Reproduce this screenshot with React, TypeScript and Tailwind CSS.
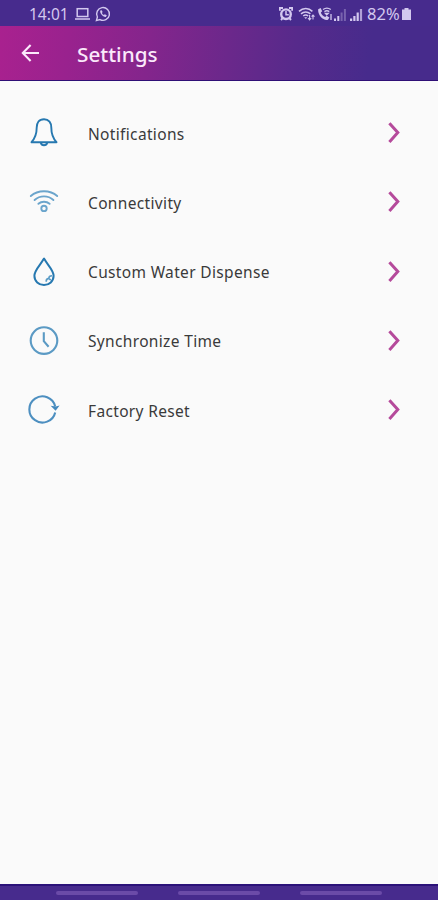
import React from 'react';

const BellIcon = () => (
  <svg width="32" height="32" viewBox="0 0 32 32" fill="none" stroke="#2678b0" strokeWidth="1.9" strokeLinejoin="round">
    <path d="M16 2.2c-5 0-7.3 3.8-7.3 8.4 0 6.6-1.6 10.8-5.2 14.6h25c-3.600-3.800-5.200-8-5.200-14.600 0-4.600-2.300-8.400-7.300-8.400z" />
    <path d="M12.800 25.800a3.300 3.300 0 0 0 6.400 0" />
  </svg>
);

const WifiIcon = () => (
  <svg width="32" height="32" viewBox="0 0 32 32" fill="none" stroke="#6ba5cc" strokeWidth="1.9" strokeLinecap="round">
    <path d="M2.800 10c7.200-6.400 19.200-6.400 26.400 0" />
    <path d="M6.600 14c5.200-4.800 13.600-4.800 18.800 0" />
    <path d="M10.400 17.800c3.200-2.800 8-2.800 11.200 0" />
    <circle cx="16" cy="22.400" r="2.700" />
  </svg>
);

const DropIcon = () => (
  <svg width="32" height="32" viewBox="0 0 32 32" fill="none" stroke="#2678b0" strokeWidth="2" strokeLinejoin="round">
    <path d="M16 2.600c-3.600 6.400-9.600 11.400-9.600 17.200 0 5.400 4.300 9.200 9.600 9.200s9.600-3.800 9.600-9.200C25.600 14 19.600 9 16 2.600z" />
    <path d="M24 19.800c-2.200 0-3.200 1.200-3.200 2.600-1.600.2-2.800 1.200-2.600 3.400M20.800 22.400l2 1.800" strokeWidth="1.600" stroke="#5b9cc6" />
  </svg>
);

const ClockIcon = () => (
  <svg width="32" height="32" viewBox="0 0 32 32" fill="none" stroke="#5b9ac4" strokeWidth="2.1">
    <circle cx="16" cy="15.600" r="13.300" />
    <path d="M15.800 7.200v9l4.800 5.600" />
  </svg>
);

const ResetIcon = () => (
  <svg width="32" height="32" viewBox="0 0 32 32" fill="none" stroke="#4d8fc0" strokeWidth="2.1">
    <path d="M27.200 18.400A13.100 13.100 0 1 1 27.200 12.400" />
    <path d="M22.600 11.800l5 5 4-5.400-3.800 1z" fill="#4389bd" stroke="none" />
  </svg>
);

const items = [
  { label: 'Notifications', Icon: BellIcon },
  { label: 'Connectivity', Icon: WifiIcon },
  { label: 'Custom Water Dispense', Icon: DropIcon },
  { label: 'Synchronize Time', Icon: ClockIcon },
  { label: 'Factory Reset', Icon: ResetIcon },
];

function StatusBar() {
  return (
    <div className="flex h-[26px] shrink-0 items-center bg-[#472b8d] pt-0.5 pr-[27px] pl-[29px] text-[#d3c8ef]">
      <span className="w-[45px] pt-px text-[15.5px] leading-none">14:01</span>
      <svg width="17" height="14" viewBox="0 0 17 14" fill="none" stroke="currentColor" strokeWidth="1.5">
        <rect x="3.200" y="1.700" width="10.600" height="7.800" />
        <path d="M1 12h15" />
      </svg>
      <svg className="ml-[4px]" width="16" height="16" viewBox="0 0 16 16" fill="none" stroke="currentColor" strokeWidth="1.4">
        <path d="M1.400 14.600l1-3.600A6.400 6.400 0 1 1 5 13.600z" />
        <path d="M5.300 4.600c-.9 2.600 2.500 6.600 5.600 6.300l.9-1.600-2-1.100-.9.900C7.900 8.600 7.200 7.900 6.900 7l.7-.9-.9-1.800z" fill="currentColor" stroke="none" />
      </svg>

      <div className="ml-auto flex items-center">
        {/* alarm */}
        <svg width="14" height="14" viewBox="0 0 14 14" fill="none" stroke="currentColor">
          <path d="M.8 3.800V1H4M13.200 3.800V1H10M2 13l1.600-1.800M12 13l-1.600-1.800" strokeWidth="2" />
          <circle cx="7" cy="7.200" r="4.800" strokeWidth="2.400" />
          <path d="M7 4v3.700h2.800" strokeWidth="1.500" />
        </svg>
        {/* wifi with traffic arrows */}
        <svg className="ml-[5px]" width="18" height="14" viewBox="0 0 18 14" fill="none" stroke="currentColor" strokeWidth="1.5">
          <path d="M1 4.400c4-3.800 9.500-3.800 13.400 0M3 6.900c2.700-2.400 6.700-2.400 9.400 0M5.200 9c1.500-1.200 3.500-1.200 5 0" />
          <path d="M6.200 10.200l1.600 1.800 1.400-1.800z" fill="currentColor" stroke="none" />
          <path d="M11.600 8v5M10 11l1.600 1.800 1.600-1.800M15 12.400V8M13.600 9.600L15 8l1.500 1.600" strokeWidth="1.1" />
        </svg>
        {/* wifi calling */}
        <svg className="ml-[1px]" width="17" height="14" viewBox="0 0 17 14" fill="none" stroke="currentColor" strokeWidth="1.3">
          <path d="M1.200 2.200L3.600 1l1.600 3.200-1.400 1.200c.6 2 2.400 3.900 4.400 4.600l1.400-1.300 2.800 1.900-1.400 2.100C6.600 14.200.4 8.200 1.200 2.200z" fill="currentColor" stroke="none" />
          <path d="M6 2.500c2.200-1.600 5.600-1.600 7.800 0M7.400 4.600c1.500-1 3.400-1 4.900 0" />
          <path d="M9.700 7.800L8.400 6.300h2.800zM14 7v6" fill="currentColor" />
        </svg>
        <svg width="13" height="13" viewBox="0 0 13 13" fill="currentColor">
          <path d="M0 10.500h2V13H0zM3.300 8h2v5h-2z" />
          <path d="M6.600 4.500h2V13h-2zM9.900 1h2v12h-2z" opacity=".35" />
        </svg>
        <svg className="ml-[3px]" width="13" height="13" viewBox="0 0 13 13" fill="currentColor">
          <path d="M0 10.500h2.200V13H0zM3.300 8h2.200v5H3.300zM6.600 4.500h2.200V13H6.600z" />
          <path d="M9.900 1h2.200v12H9.900z" opacity=".75" />
        </svg>
        <span className="ml-[4px] w-[35px] text-[16.5px] leading-none">82%</span>
        <svg width="9" height="12" viewBox="0 0 9 12" fill="currentColor">
          <path d="M2.500 0h4v1.500H9V12H0V1.500h2.500z" />
        </svg>
      </div>
    </div>
  );
}

function Header() {
  return (
    <header className="flex h-[55px] shrink-0 items-center border-b border-[#2f0f76] bg-linear-[97deg,#a9218f_0%,#99228e_16%,#84258c_34%,#6b288b_52%,#572a8b_67%,#472b8c_84%] pl-[21px]">
      <button className="w-[56px] text-[#fbe9fb]">
        <svg width="20" height="20" viewBox="0 0 20 20" fill="none" stroke="currentColor" strokeWidth="2.1">
          <path d="M18 10H2M9.600 2L1.800 10l7.800 8" />
        </svg>
      </button>
      <h1 className="pt-1 text-[20.7px] font-medium text-[#fbe9fb]">Settings</h1>
    </header>
  );
}

export default function App() {
  return (
    <div className="flex h-[900px] w-[438px] flex-col overflow-hidden bg-[#fafafa] font-['Noto_Sans',sans-serif]">
      <StatusBar />
      <Header />

      <main className="flex-1 pt-[17.5px]">
        {items.map(({ label, Icon }) => (
          <button key={label} className="flex h-[69.3px] w-full items-center pr-[37px] pl-[28px] text-left">
            <Icon />
            <span className="ml-[28px] pt-[2px] text-[15.5px] tracking-[0.34px] text-[#3a3a3a]">{label}</span>
            <svg className="ml-auto" width="14" height="24" viewBox="0 0 14 24" fill="none" stroke="#b54a9b" strokeWidth="3">
              <path d="M2.400 2.200l8.400 9.400-8.400 9.400" />
            </svg>
          </button>
        ))}
      </main>

      {/* Navigation gesture hints */}
      <nav className="flex h-4 shrink-0 items-start justify-center gap-[40px] border-t-2 border-[#2b1279] bg-[#472b8d] pt-[5px]">
        <span className="h-1 w-[82px] rounded-full bg-[#6b4ba8]" />
        <span className="h-1 w-[82px] rounded-full bg-[#6b4ba8]" />
        <span className="h-1 w-[82px] rounded-full bg-[#6b4ba8]" />
      </nav>
    </div>
  );
}
